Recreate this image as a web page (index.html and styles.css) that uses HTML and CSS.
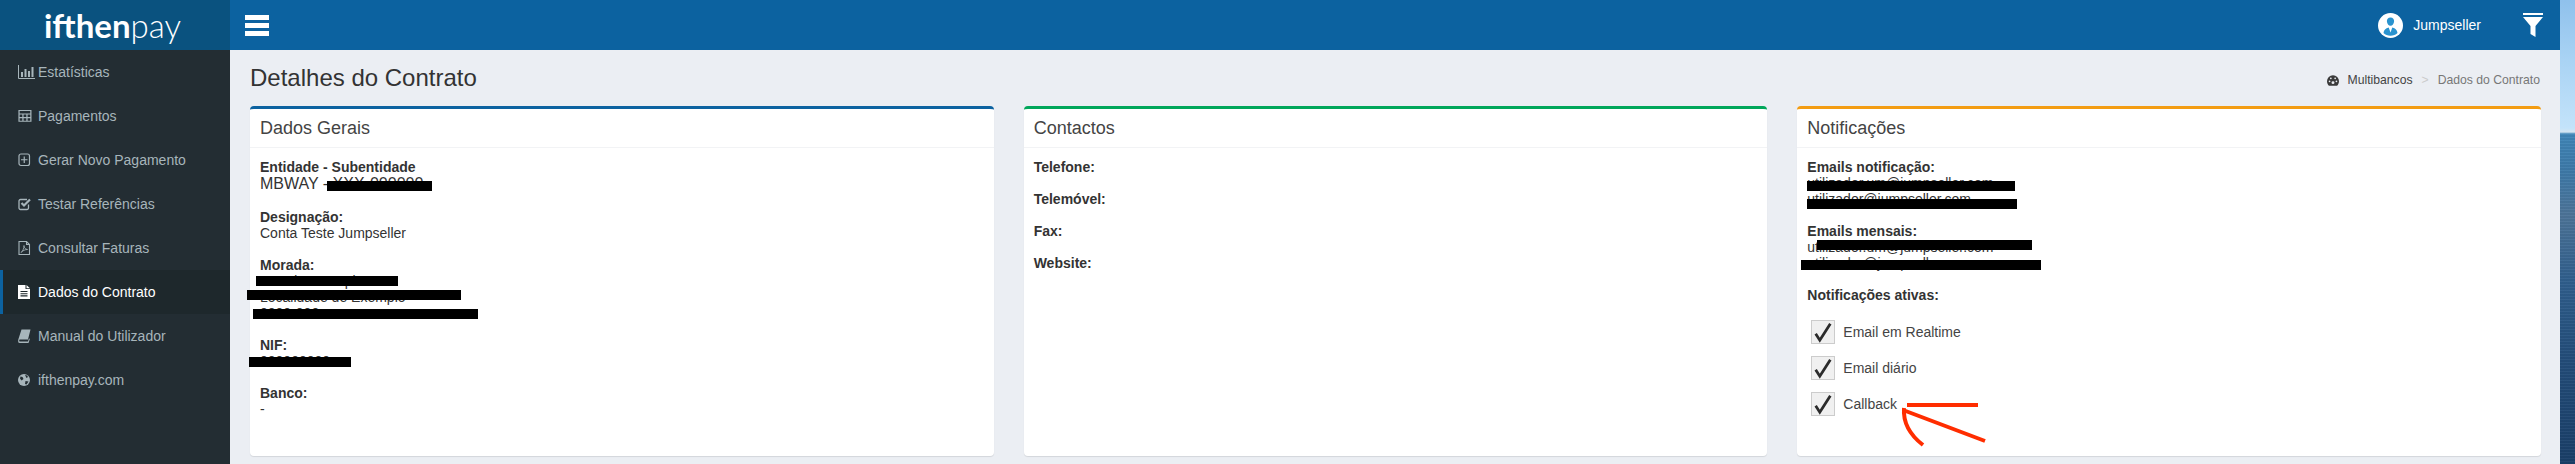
FILE: index.html
```html
<!DOCTYPE html>
<html lang="pt">
<head>
<meta charset="utf-8">
<title>Detalhes do Contrato</title>
<link rel="stylesheet" href="styles.css">
</head>
<body>
<div class="app">
  <aside class="sidebar">
    <div class="brand"><span class="brand-strong">ifthen</span><span class="brand-light">pay</span></div>
    <nav class="nav">
      <a class="nav-item"><svg class="nav-icon" viewBox="0 0 17 14"><path d="M0.5 0v13.5H17" fill="none" stroke="currentColor"/><path d="M3 7h2v5H3zM6.500 4h2v8h-2zM10 6h2v6h-2zM13.500 2h2v10h-2z" fill="currentColor"/></svg>Estatísticas</a>
      <a class="nav-item"><svg class="nav-icon" viewBox="0 0 17 14"><path d="M1 1h11.500v11H1z M1 4.600h11.500M1 8.300h11.500M4.800 4.600V12M8.700 4.600V12" transform="translate(0 .5) scale(1.03 .98)" fill="none" stroke="currentColor" stroke-width="1.200"/></svg>Pagamentos</a>
      <a class="nav-item"><svg class="nav-icon" viewBox="0 0 17 14"><rect x="1" y="1" width="10.500" height="11.500" rx="2" fill="none" stroke="currentColor" stroke-width="1.200"/><path d="M6.250 3.500v6.500M3 6.750h6.500" stroke="currentColor" stroke-width="1.200"/></svg>Gerar Novo Pagamento</a>
      <a class="nav-item"><svg class="nav-icon" viewBox="0 0 17 14"><path d="M10.500 7.500V11a1.500 1.500 0 0 1-1.500 1.500H2.500A1.500 1.500 0 0 1 1 11V4a1.500 1.500 0 0 1 1.500-1.500H9" fill="none" stroke="currentColor" stroke-width="1.300"/><path d="M3.500 6l2.500 2.500 6-6" fill="none" stroke="currentColor" stroke-width="2.200"/></svg>Testar Referências</a>
      <a class="nav-item"><svg class="nav-icon" viewBox="0 0 17 14"><path d="M1 .5h7.500L11.500 3.500v10H1z M8.500 .5v3h3" fill="none" stroke="currentColor" stroke-width="1.100"/><path d="M3 11.500c2-1.500 3-4.500 3-7 0 2.500 1 3.500 3.500 4-2.500 0-4.500 1-6.500 3z" fill="none" stroke="currentColor" stroke-width=".8"/></svg>Consultar Faturas</a>
      <a class="nav-item nav-item-active"><svg class="nav-icon" viewBox="0 0 17 14"><path d="M0 0h7.500v4h4.500v10H0z M8.500 0l3.500 3.200H8.500z" fill="currentColor"/><path d="M2.500 6.500h7M2.500 8.700h7M2.500 10.900h7" stroke="#1e282c" stroke-width="1.100"/></svg>Dados do Contrato</a>
      <a class="nav-item"><svg class="nav-icon" viewBox="0 0 17 14"><path d="M3.500 .5h9L10 10.500H1.800c-.8 0-.8 2 0 2H10l.8-2.500 1.200-.5-1.500 4.500H1.500C0 14 0 12 .3 10.500z" fill="currentColor"/></svg>Manual do Utilizador</a>
      <a class="nav-item"><svg class="nav-icon" viewBox="0 0 17 14"><circle cx="6" cy="7" r="6" fill="currentColor"/><path d="M2.500 3.500l2 .5 1 2-2 1.500-1.500-2zM7 2l2 .5 1 1.500-1.500 1zM7.500 8l3 .5-2 3-1.500-.5z" fill="#232d33"/></svg>ifthenpay.com</a>
    </nav>
  </aside>
  <main class="main">
    <header class="topbar">
      <button class="menu-toggle" type="button" aria-label="Menu"><span class="menu-bar"></span><span class="menu-bar"></span><span class="menu-bar"></span></button>
      <div class="user">
        <svg class="avatar" viewBox="0 0 25 25"><circle cx="12.500" cy="12.500" r="12.500" fill="#fff"/><path d="M12.500 4.500c2.500 0 3.800 1.800 3.600 4-.2 2-1.600 4.300-3.600 4.300s-3.400-2.300-3.600-4.300c-.2-2.200 1.100-4 3.600-4zM5.500 20c.3-3.200 2-4.600 5.200-5.500l1.800 5 1.800-5c3.200.9 4.900 2.300 5.200 5.500-1.800 1.700-4.200 2.700-7 2.700s-5.200-1-7-2.700z" fill="#2a93cf"/></svg>
        <span class="user-name">Jumpseller</span>
      </div>
      <svg class="funnel" viewBox="0 0 20 24"><path d="M0 0h20v2H0zM0 4h20l-7.500 9v11l-5-3v-8z" fill="#fff"/></svg>
    </header>
    <div class="page-head">
      <h1 class="page-title">Detalhes do Contrato</h1>
      <ol class="crumbs">
        <li class="crumb crumb-root"><svg class="crumb-icon" viewBox="0 0 14 12"><path d="M7 0a7 7 0 0 0-7 7c0 1.700.6 3.300 1.600 4.500.2.300.5.500.9.500h9c.4 0 .7-.2.900-.5C13.400 10.300 14 8.700 14 7a7 7 0 0 0-7-7z" fill="#3a3a3a"/><circle cx="3" cy="7" r="1" fill="#ebeef3"/><circle cx="4.500" cy="3.500" r="1" fill="#ebeef3"/><circle cx="9.500" cy="3.500" r="1" fill="#ebeef3"/><circle cx="11" cy="7" r="1" fill="#ebeef3"/><circle cx="7" cy="8.500" r="1.700" fill="#ebeef3"/></svg>Multibancos</li>
        <li class="crumb-sep">&gt;</li>
        <li class="crumb">Dados do Contrato</li>
      </ol>
    </div>
    <div class="cards">
      <section class="card card-blue">
        <h2 class="card-title">Dados Gerais</h2>
        <div class="card-body">
          <div class="field"><strong class="label">Entidade - Subentidade</strong><span class="value value-large">MBWAY - XXX-000000</span></div>
          <div class="field"><strong class="label">Designação:</strong><span class="value">Conta Teste Jumpseller</span></div>
          <div class="field"><strong class="label">Morada:</strong><span class="value">Rua de Exemplo</span><span class="value">Localidade de Exemplo</span><span class="value">0000-000</span></div>
          <div class="field"><strong class="label">NIF:</strong><span class="value">000000000</span></div>
          <div class="field"><strong class="label">Banco:</strong><span class="value">-</span></div>
        </div>
      </section>
      <section class="card card-green">
        <h2 class="card-title">Contactos</h2>
        <div class="card-body">
          <div class="field"><strong class="label">Telefone:</strong></div>
          <div class="field"><strong class="label">Telemóvel:</strong></div>
          <div class="field"><strong class="label">Fax:</strong></div>
          <div class="field"><strong class="label">Website:</strong></div>
        </div>
      </section>
      <section class="card card-orange">
        <h2 class="card-title">Notificações</h2>
        <div class="card-body">
          <div class="field"><strong class="label">Emails notificação:</strong><span class="value">utilizador.um@jumpseller.com</span><span class="value">utilizador@jumpseller.com</span></div>
          <div class="field"><strong class="label">Emails mensais:</strong><span class="value">utilizador.um@jumpseller.com</span><span class="value">utilizador@jumpseller.com</span></div>
          <div class="field field-tight"><strong class="label">Notificações ativas:</strong></div>
          <div class="checks">
            <div class="check-row"><span class="checkbox"><svg class="tick" viewBox="0 0 24 24"><path d="M4 14l4.500 7L20 3" fill="none" stroke="#2b2b2b" stroke-width="3"/></svg></span>Email em Realtime</div>
            <div class="check-row"><span class="checkbox"><svg class="tick" viewBox="0 0 24 24"><path d="M4 14l4.500 7L20 3" fill="none" stroke="#2b2b2b" stroke-width="3"/></svg></span>Email diário</div>
            <div class="check-row"><span class="checkbox"><svg class="tick" viewBox="0 0 24 24"><path d="M4 14l4.500 7L20 3" fill="none" stroke="#2b2b2b" stroke-width="3"/></svg></span>Callback</div>
          </div>
        </div>
      </section>
    </div>
  </main>
  <div class="redact redact-entity"></div>
  <div class="redact redact-addr1"></div>
  <div class="redact redact-addr2"></div>
  <div class="redact redact-addr3"></div>
  <div class="redact redact-nif"></div>
  <div class="redact redact-mail1"></div>
  <div class="redact redact-mail2"></div>
  <div class="redact redact-mail3"></div>
  <div class="redact redact-mail4"></div>
  <svg class="annotation" viewBox="0 0 90 50"><path d="M7 5h71" fill="none" stroke="#ff2d00" stroke-width="4"/><path d="M3 10l82 31M4 8c-1 14 6 27 19 37" fill="none" stroke="#ff2d00" stroke-width="4"/></svg>
</div>
</body>
</html>
```

FILE: styles.css
```css
* { box-sizing: border-box; }
html, body { height: 100%; }
body {
  margin: 0;
  overflow: hidden;
  font-family: "Liberation Sans", Arial, sans-serif;
  font-size: 14px;
  color: #333;
  background:
    repeating-linear-gradient(180deg, rgba(255,255,255,.04) 0 1px, rgba(0,0,0,.04) 1px 3px) 0 134px no-repeat,
    linear-gradient(180deg, #8fc1ec 0, #a9d3f4 60px, #c3e3fa 128px, #d4e6f2 132px, #3f86b8 134px, #3d7aa9 170px, #4d7498 215px, #305f8d 280px, #234d7a 360px, #1a3f68 464px);
}
.app { position: relative; display: flex; width: 2560px; height: 464px; overflow: hidden; background: #ebeef3; }

.sidebar { flex: 0 0 230px; background: #232d33; }
.brand {
  display: flex; align-items: center; justify-content: center;
  height: 50px; padding-right: 5px;
  background: #0a527f; color: #fff;
  font-family: Lato, sans-serif; font-size: 33px; line-height: 50px;
}
.brand-strong { font-weight: 700; }
.brand-light { font-weight: 300; }
.nav { display: flex; flex-direction: column; }
.nav-item {
  display: flex; align-items: center;
  height: 44px; padding-left: 18px;
  color: #a7b5bb; font-size: 14px;
}
.nav-item-active { padding-left: 15px; border-left: 3px solid #0c62a0; background: #1e282c; color: #fff; }
.nav-icon { flex: none; width: 17px; height: 14px; margin-right: 3px; }

.main { display: flex; flex-direction: column; flex: 1; min-width: 0; }
.topbar { display: flex; align-items: center; flex: 0 0 50px; padding: 0 17px 0 15px; background: #0c62a0; color: #fff; }
.menu-toggle { display: flex; flex-direction: column; gap: 3px; width: 24px; padding: 0; border: 0; background: none; }
.menu-bar { display: block; height: 5px; background: #fff; }
.user { display: flex; align-items: center; margin-left: auto; }
.avatar { width: 25px; height: 25px; margin-right: 10px; }
.user-name { font-size: 14px; }
.funnel { width: 20px; height: 24px; margin-left: 42px; }

.page-head { display: flex; align-items: center; justify-content: space-between; flex: 0 0 56px; padding: 0 20px 0 20px; }
.page-title { margin: 0 0 1px; font-size: 24px; font-weight: 400; line-height: 1; color: #333; }
.crumbs { display: flex; align-items: center; margin: 4px 0 0; padding: 0; list-style: none; font-size: 12.200px; color: #777; }
.crumb-root { display: flex; align-items: center; color: #444; }
.crumb-icon { width: 12px; height: 11px; margin-right: 9px; }
.crumb-sep { margin: 0 9px; color: #ccc; }

.cards { display: grid; grid-template-columns: repeat(3, 1fr); gap: 30px; flex: 0 0 350px; padding: 0 19px 0 20px; }
.card { border-top: 3px solid; border-radius: 4px; background: #fff; box-shadow: 0 1px 1px rgba(0,0,0,.1); }
.card-blue { border-top-color: #0c62a0; }
.card-green { border-top-color: #00a65a; }
.card-orange { border-top-color: #f39c12; }
.card-title { margin: 0; height: 39px; padding: 0 10px; border-bottom: 1px solid #f2f3f5; font-size: 18px; font-weight: 400; line-height: 38px; color: #444; }
.card-body { padding: 11px 10px; }
.field { margin-bottom: 16px; }
.field-tight { margin-bottom: 17px; }
.label { display: block; font-size: 14px; font-weight: 700; line-height: 16px; color: #333; }
.value { display: block; font-size: 14px; line-height: 16px; color: #333; }
.value-large { font-size: 16px; line-height: 18px; }
.checks { display: flex; flex-direction: column; gap: 12px; padding-left: 4px; }
.check-row { display: flex; align-items: center; height: 24px; font-size: 14px; line-height: 22px; color: #444; }
.checkbox { display: block; flex: none; width: 24px; height: 24px; margin-right: 8px; border: 1px solid #ccc; background: #f0f0f0; }
.tick { display: block; width: 22px; height: 22px; }

.redact { position: absolute; background: #000; }
.redact-entity { left: 327px; top: 181px; width: 105px; height: 10px; }
.redact-addr1 { left: 256px; top: 276px; width: 142px; height: 10px; }
.redact-addr2 { left: 247px; top: 290px; width: 214px; height: 10px; }
.redact-addr3 { left: 253px; top: 309px; width: 225px; height: 10px; }
.redact-nif { left: 249px; top: 357px; width: 102px; height: 10px; }
.redact-mail1 { left: 1807px; top: 181px; width: 208px; height: 10px; }
.redact-mail2 { left: 1807px; top: 199px; width: 210px; height: 10px; }
.redact-mail3 { left: 1817px; top: 240px; width: 215px; height: 10px; }
.redact-mail4 { left: 1801px; top: 260px; width: 240px; height: 10px; }
.annotation { position: absolute; left: 1900px; top: 400px; width: 90px; height: 50px; }
```
